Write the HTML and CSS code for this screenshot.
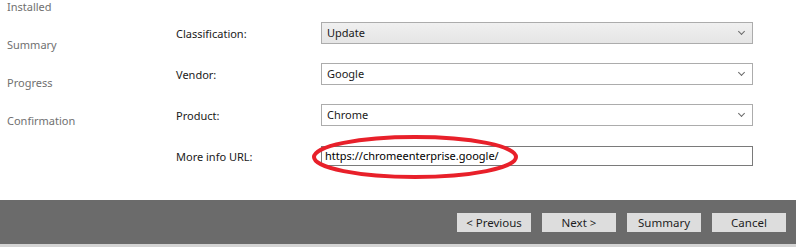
FILE: index.html
```html
<!DOCTYPE html>
<html lang="en">

<head>
    <meta charset="UTF-8">
    <meta name="viewport" content="width=device-width, initial-scale=1.0">
    <title>Deploy Wizard</title>
    <link rel="stylesheet" href="styles.css">
</head>

<body>
    <div class="wizard">
        <!-- 左侧步骤 -->
        <ul class="steps">
            <li>Installed</li>
            <li>Summary</li>
            <li>Progress</li>
            <li>Confirmation</li>
        </ul>

        <!-- 表单 -->
        <div class="form">
            <div class="row">
                <span class="label">Classification:</span>
                <div class="select active">Update<span class="chev"></span></div>
            </div>
            <div class="row">
                <span class="label">Vendor:</span>
                <div class="select">Google<span class="chev"></span></div>
            </div>
            <div class="row">
                <span class="label">Product:</span>
                <div class="select">Chrome<span class="chev"></span></div>
            </div>
            <div class="row url">
                <span class="label">More info URL:</span>
                <div class="input">https://chromeenterprise.google/</div>
            </div>

            <!-- 红圈标注 -->
            <svg class="mark" width="214" height="52" viewBox="0 0 214 52">
                <ellipse cx="107" cy="26" rx="101" ry="20" fill="none" stroke="#e8202a" stroke-width="4" />
            </svg>
        </div>
    </div>

    <div class="footer">
        <button class="btn">&lt; Previous</button>
        <button class="btn">Next &gt;</button>
        <button class="btn">Summary</button>
        <button class="btn">Cancel</button>
    </div>
    <div class="strip"></div>
</body>

</html>
```

FILE: styles.css
```css
body {
    margin: 0;
    width: 796px;
    height: 247px;
    overflow: hidden;
    background: #fff;
    font-family: "Noto Sans", "Liberation Sans", sans-serif;
    font-size: 11px;
    color: #1a1a1a;
}

.wizard {
    height: 200px;
    display: flex;
    overflow: hidden;
}

.steps {
    width: 176px;
    margin: -12px 0 0;
    padding: 0 0 0 7px;
    box-sizing: border-box;
    list-style: none;
    color: #707070;
}

.steps li {
    height: 38px;
    line-height: 38px;
}

.form {
    position: relative;
    padding-top: 22px;
}

.row {
    display: flex;
    align-items: center;
    height: 22px;
    margin-bottom: 19px;
}

.row.url {
    margin-top: 3px;
}

.label {
    width: 145px;
}

.select {
    position: relative;
    width: 432px;
    height: 22px;
    box-sizing: border-box;
    border: 1px solid #acacac;
    background: #fff;
    padding-left: 5px;
    line-height: 20px;
}

.select.active {
    background: linear-gradient(#f0f0f0, #e5e5e5);
}

/* 下拉箭头 */
.chev {
    position: absolute;
    right: 8px;
    top: 6px;
    width: 4px;
    height: 4px;
    border-right: 1.5px solid #6a6a6a;
    border-bottom: 1.5px solid #6a6a6a;
    transform: rotate(45deg);
}

.input {
    width: 432px;
    height: 20px;
    box-sizing: border-box;
    border: 1px solid #7a7a7a;
    padding-left: 3px;
    line-height: 18px;
    color: #000;
}

.mark {
    position: absolute;
    left: 132px;
    top: 131px;
}

.footer {
    height: 44px;
    background: #6b6b6b;
    display: flex;
    justify-content: flex-end;
    align-items: center;
    gap: 11px;
    padding-right: 10px;
    box-sizing: border-box;
}

.btn {
    width: 74px;
    height: 19px;
    border: none;
    background: #dddddd;
    font-family: inherit;
    font-size: 11.5px;
    color: #1e1e1e;
    padding: 0;
}

.strip {
    height: 3px;
    background: #d4d4d4;
}
```
